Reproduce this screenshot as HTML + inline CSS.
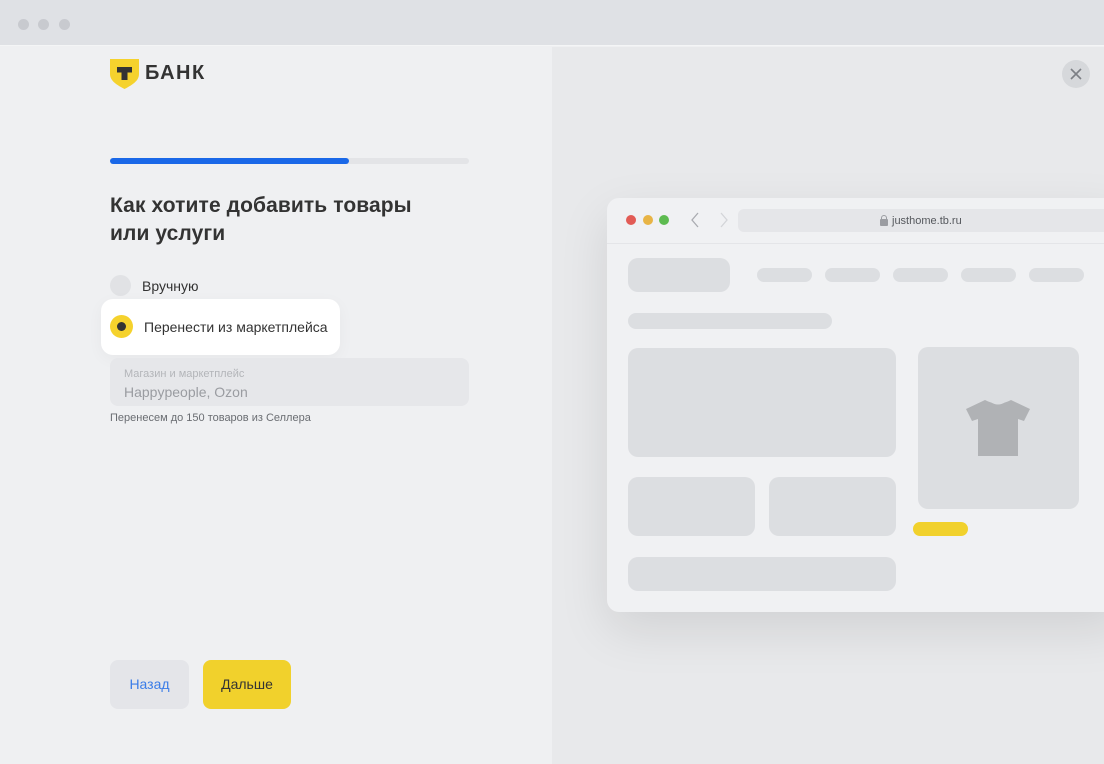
<!DOCTYPE html>
<html><head><meta charset="utf-8"><style>
*{margin:0;padding:0;box-sizing:border-box}
body{width:1104px;height:764px;overflow:hidden;font-family:"Liberation Sans",sans-serif;background:#eff0f2;position:relative}
.a{position:absolute}
.g{background:#dcdee1;position:absolute}
</style></head><body>
<div class="a" style="left:0;top:0;width:1104px;height:46px;background:#dfe1e5;border-bottom:1px solid #f4f5f6"></div>
<div class="a" style="left:18px;top:19px;width:11px;height:11px;border-radius:50%;background:#c8cacf"></div>
<div class="a" style="left:38px;top:19px;width:11px;height:11px;border-radius:50%;background:#c8cacf"></div>
<div class="a" style="left:59px;top:19px;width:11px;height:11px;border-radius:50%;background:#c8cacf"></div>
<div class="a" style="left:552px;top:47px;width:552px;height:717px;background:#e8e9eb"></div>
<div class="a" style="left:1062px;top:60px;width:28px;height:28px;border-radius:50%;background:#d6d8db"></div>
<svg class="a" style="left:1062px;top:60px" width="28" height="28"><path d="M9 9L19 19M19 9L9 19" stroke="#7c7f85" stroke-width="1.6"/></svg>
<!-- logo -->
<svg class="a" style="left:110px;top:59px" width="30" height="31"><path d="M0 0H29V15C29 22 22 26 14.5 30C7 26 0 22 0 15Z" fill="#f5d22d"/><path d="M7 8H22V13.5H17.5V21H11.5V13.5H7Z" fill="#333"/></svg>
<div class="a" style="left:145px;top:62px;font-size:20px;font-weight:bold;color:#333;letter-spacing:1.5px">БАНК</div>
<div class="a" style="left:110px;top:158px;width:359px;height:6px;border-radius:3px;background:#e3e4e7"></div>
<div class="a" style="left:110px;top:158px;width:239px;height:6px;border-radius:3px;background:#1a68e8"></div>
<div class="a" style="left:110px;top:192px;font-size:21px;font-weight:bold;color:#333;line-height:28px;letter-spacing:0.1px">Как хотите добавить товары<br>или услуги</div>
<div class="a" style="left:110px;top:275px;width:21px;height:21px;border-radius:50%;background:#e1e2e5"></div>
<div class="a" style="left:142px;top:278px;font-size:14px;color:#333">Вручную</div>
<div class="a" style="left:101px;top:299px;width:239px;height:56px;border-radius:12px;background:#fff;box-shadow:0 4px 16px rgba(0,0,0,.04)"></div>
<div class="a" style="left:110px;top:315px;width:23px;height:23px;border-radius:50%;background:#f5d22d"></div>
<div class="a" style="left:117px;top:322px;width:9px;height:9px;border-radius:50%;background:#333"></div>
<div class="a" style="left:144px;top:319px;font-size:14px;color:#333">Перенести из маркетплейса</div>
<div class="a" style="left:110px;top:358px;width:359px;height:48px;border-radius:8px;background:#e6e7ea"></div>
<div class="a" style="left:124px;top:368px;font-size:11px;color:#b3b5b9">Магазин и маркетплейс</div>
<div class="a" style="left:124px;top:384px;font-size:14px;color:#9a9ca1">Happypeople, Ozon</div>
<div class="a" style="left:110px;top:412px;font-size:11px;color:#6a6d72">Перенесем до 150 товаров из Селлера</div>
<div class="a" style="left:110px;top:660px;width:79px;height:49px;border-radius:8px;background:#e4e5e9;color:#3a7ce8;font-size:14px;text-align:center;line-height:49px">Назад</div>
<div class="a" style="left:203px;top:660px;width:88px;height:49px;border-radius:8px;background:#f1d12c;color:#333;font-size:14px;text-align:center;line-height:49px">Дальше</div>
<!-- browser -->
<div class="a" style="left:607px;top:198px;width:520px;height:414px;border-radius:12px;background:#f0f1f3;box-shadow:0 18px 50px rgba(0,0,0,.10)"></div>
<div class="a" style="left:607px;top:243px;width:497px;height:1px;background:#e4e5e8"></div>
<div class="a" style="left:626px;top:215px;width:10px;height:10px;border-radius:50%;background:#e25b55"></div>
<div class="a" style="left:643px;top:215px;width:10px;height:10px;border-radius:50%;background:#e8b445"></div>
<div class="a" style="left:659px;top:215px;width:10px;height:10px;border-radius:50%;background:#5dbb50"></div>
<svg class="a" style="left:690px;top:212px" width="40" height="16"><path d="M8 1L2 8L8 15" stroke="#a9abb0" fill="none" stroke-width="1.3"/><path d="M31 1L37 8L31 15" stroke="#d3d5d8" fill="none" stroke-width="1.3"/></svg>
<div class="a" style="left:738px;top:209px;width:380px;height:23px;border-radius:6px;background:#e5e6e9"></div>
<div class="a" style="left:880px;top:219px;width:8px;height:7px;background:#9a9ca1;border-radius:1px"></div>
<div class="a" style="left:881px;top:215px;width:6px;height:6px;border:1.5px solid #9a9ca1;border-radius:3px 3px 0 0"></div>
<div class="a" style="left:892px;top:215px;font-size:11px;color:#55585d">justhome.tb.ru</div>
<div class="g" style="left:628px;top:258px;width:102px;height:34px;border-radius:10px"></div>
<div class="g" style="left:757px;top:268px;width:55px;height:14px;border-radius:7px"></div>
<div class="g" style="left:825px;top:268px;width:55px;height:14px;border-radius:7px"></div>
<div class="g" style="left:893px;top:268px;width:55px;height:14px;border-radius:7px"></div>
<div class="g" style="left:961px;top:268px;width:55px;height:14px;border-radius:7px"></div>
<div class="g" style="left:1029px;top:268px;width:55px;height:14px;border-radius:7px"></div>
<div class="g" style="left:628px;top:313px;width:204px;height:16px;border-radius:8px"></div>
<div class="g" style="left:628px;top:348px;width:268px;height:109px;border-radius:10px"></div>
<div class="g" style="left:628px;top:477px;width:127px;height:59px;border-radius:10px"></div>
<div class="g" style="left:769px;top:477px;width:127px;height:59px;border-radius:10px"></div>
<div class="g" style="left:628px;top:557px;width:268px;height:34px;border-radius:10px"></div>
<div class="g" style="left:918px;top:347px;width:161px;height:162px;border-radius:10px"></div>
<svg class="a" style="left:965px;top:399px" width="66" height="58"><path d="M1 10L20 1Q33 8 46 1L65 10L59 22L53 20V57H13V20L7 22Z" fill="#b0b2b5"/><path d="M26 2Q33 7 40 2" stroke="#dcdee1" stroke-width="2" fill="none"/></svg>
<div class="a" style="left:913px;top:522px;width:55px;height:14px;border-radius:7px;background:#f1d12c"></div>
</body></html>
